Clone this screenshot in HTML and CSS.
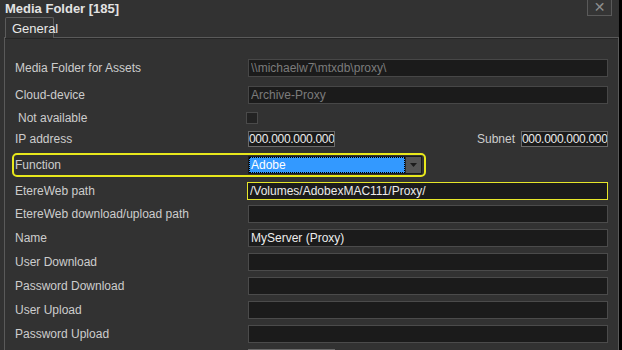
FILE: index.html
```html
<!DOCTYPE html>
<html lang="en">
<head>
    <meta charset="UTF-8">
    <title>Media Folder [185]</title>
    <link rel="stylesheet" href="styles.css">
</head>
<body>
    <div class="window">
        <div class="titlebar">
            <span class="title">Media Folder [185]</span>
            <button class="close" type="button">&#x2715;</button>
        </div>

        <div class="tabs">
            <div class="tab active">General</div>
        </div>

        <div class="panel">
            <div class="row r-first">
                <label class="lbl">Media Folder for Assets</label>
                <input class="field disabled" type="text" value="\\michaelw7\mtxdb\proxy\" disabled>
            </div>
            <div class="row r-cloud">
                <label class="lbl">Cloud-device</label>
                <input class="field disabled" type="text" value="Archive-Proxy" disabled>
            </div>
            <div class="row r-check">
                <label class="lbl indent">Not available</label>
                <span class="checkbox"></span>
            </div>
            <div class="row r-ip">
                <label class="lbl">IP address</label>
                <input class="field ip" type="text" value="000.000.000.000">
                <span class="spacer"></span>
                <label class="sub-lbl">Subnet</label>
                <input class="field ip" type="text" value="000.000.000.000">
            </div>
            <div class="row r-func">
                <div class="highlight">
                    <label class="lbl">Function</label>
                    <div class="select">
                        <span class="select-value">Adobe</span>
                        <span class="select-btn">
                            <svg width="7" height="4" viewBox="0 0 7 4"><path d="M0 0h7L3.5 4z" fill="#1c1c1c"/></svg>
                        </span>
                    </div>
                </div>
            </div>
            <div class="row r-path">
                <label class="lbl">EtereWeb path</label>
                <input class="field marked" type="text" value="/Volumes/AdobexMAC111/Proxy/">
            </div>
            <div class="row">
                <label class="lbl">EtereWeb download/upload path</label>
                <input class="field" type="text" value="">
            </div>
            <div class="row">
                <label class="lbl">Name</label>
                <input class="field" type="text" value="MyServer (Proxy)">
            </div>
            <div class="row">
                <label class="lbl">User Download</label>
                <input class="field" type="text" value="">
            </div>
            <div class="row">
                <label class="lbl">Password Download</label>
                <input class="field" type="password" value="">
            </div>
            <div class="row">
                <label class="lbl">User Upload</label>
                <input class="field" type="text" value="">
            </div>
            <div class="row">
                <label class="lbl">Password Upload</label>
                <input class="field" type="password" value="">
            </div>
            <div class="row r-last">
                <span class="lbl"></span>
                <input class="field ip" type="text" value="">
            </div>
        </div>
    </div>
</body>
</html>
```

FILE: styles.css
```css
* {
    margin: 0;
    padding: 0;
    box-sizing: border-box;
}

body {
    width: 622px;
    height: 350px;
    overflow: hidden;
    background: #000;
    font-family: "Liberation Sans Narrow", "Liberation Sans", Arial, sans-serif;
    font-size: 12px;
    color: #cfcfcf;
}

.window {
    width: 619px;
    height: 350px;
    background: #323232;
    display: flex;
    flex-direction: column;
}

.titlebar {
    height: 17px;
    display: flex;
    align-items: center;
    justify-content: space-between;
    padding: 0 7px 0 5px;
}

.title {
    font-weight: bold;
    font-size: 13px;
    color: #e2e2e2;
    margin-top: -1px;
}

.close {
    width: 25px;
    height: 17px;
    margin-top: -3px;
    background: #353535;
    border: 1px solid #5a5a5a;
    color: #8e8e8e;
    font-size: 14px;
    font-weight: bold;
    line-height: 14px;
    font-family: "DejaVu Sans", sans-serif;
}

.tabs {
    display: flex;
    padding-left: 5px;
    height: 20px;
    position: relative;
    z-index: 1;
}

.tab {
    width: 49px;
    height: 21px;
    padding: 3px 0 0 6px;
    background: #333;
    border: 1px solid #5c5c5c;
    border-bottom: none;
    border-radius: 2px 2px 0 0;
    color: #e8e8e8;
    font-size: 13px;
}

.panel {
    flex: 1;
    margin-left: 4px;
    border: 1px solid #5a5a5a;
    border-bottom: none;
    box-shadow: inset 0 1px 0 #262626;
    padding-top: 18px;
    overflow: hidden;
}

.row {
    display: flex;
    align-items: center;
    height: 24px;
    padding-left: 10px;
    padding-right: 10px;
}

.r-first { height: 24px; }
.r-cloud { height: 30px; }
.r-check { height: 16px; }
.r-ip { height: 25px; }
.r-func { height: 28px; }
.r-path { height: 23px; }
.r-last { align-items: flex-start; padding-top: 3px; }

.lbl {
    width: 233px;
    flex: none;
    color: #cdcdcd;
    white-space: nowrap;
}

.lbl.indent {
    padding-left: 3px;
    width: 232px;
}

.field {
    height: 18px;
    flex: 1;
    min-width: 0;
    background: #1b1b1b;
    border: 1px solid #4b4b4b;
    color: #ececec;
    font: inherit;
    padding: 0 2px;
    outline: none;
}

.field.disabled {
    color: #7c7c7c;
    border-color: #474747;
}

.field.marked {
    border-color: #e6e62a;
    margin-left: -1px;
}

.field.ip {
    flex: none;
    width: 87px;
    height: 16px;
    border-color: #6a6a6a;
    padding: 0;
    letter-spacing: -0.3px;
}

.spacer {
    flex: 1;
}

.sub-lbl {
    margin-right: 6px;
    color: #cdcdcd;
}

.checkbox {
    width: 12px;
    height: 12px;
    margin-left: -1px;
    background: #232323;
    border: 1px solid #4a4a4a;
}

.highlight {
    display: flex;
    align-items: center;
    height: 24px;
    margin-left: -3px;
    width: 414px;
    padding-left: 1px;
    border: 2px solid #e8e81c;
    border-radius: 5px;
}

.select {
    display: flex;
    width: 174px;
    height: 18px;
    background: #232323;
    border: 1px solid #1a1a1a;
}

.select-value {
    flex: 1;
    background: #3399ff;
    color: #fff;
    outline: 1px dotted #000;
    outline-offset: -1px;
    padding-left: 2px;
    line-height: 16px;
}

.select-btn {
    width: 16px;
    display: flex;
    align-items: center;
    justify-content: center;
    background: #555;
    border-left: 1px solid #2a2a2a;
}
```
